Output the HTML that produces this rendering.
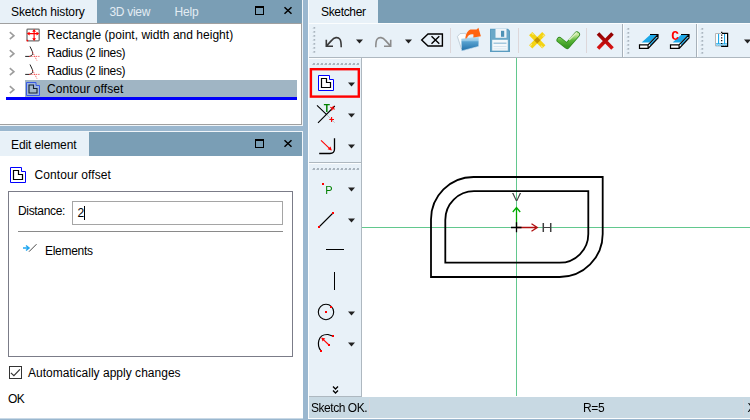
<!DOCTYPE html>
<html>
<head>
<meta charset="utf-8">
<title>Sketcher</title>
<style>
*{box-sizing:border-box;margin:0;padding:0}
html,body{width:750px;height:420px;overflow:hidden}
body{position:relative;background:#9ab7cf;font-family:"Liberation Sans",sans-serif;font-size:12px;color:#000}
.abs{position:absolute}
.t{position:absolute;white-space:nowrap;line-height:16px;height:16px;font-size:12px;color:#000}
.tabbar{position:absolute;background:#7a9eb5}
.tab{position:absolute;background:#e8f1f8}
.tw{color:#e3ecf3}
svg{position:absolute;overflow:visible}
#cv,#lb,#tb{will-change:transform}
</style>
</head>
<body>

<!-- ================= LEFT TOP: Sketch history ================= -->
<div class="abs" style="left:0;top:0;width:302px;height:125px;background:#fff"></div>
<div class="tabbar" style="left:0;top:0;width:302px;height:23px"></div>
<div class="tab" style="left:0;top:0;width:97px;height:23px"></div>
<div class="t" id="t1" style="left:11px;top:4px;letter-spacing:-0.12px">Sketch history</div>
<div class="t tw" id="t2" style="left:109.5px;top:4px;letter-spacing:-0.3px">3D view</div>
<div class="t tw" id="t3" style="left:174.5px;top:4px;letter-spacing:-0.2px">Help</div>
<svg style="left:255px;top:6px" width="10" height="10"><rect x="0.5" y="1" width="8" height="7.5" fill="none" stroke="#000" stroke-width="1"/><rect x="0" y="0" width="9" height="2" fill="#000"/></svg>
<svg style="left:284px;top:6px" width="9" height="9"><path d="M0.5 1.3 L7.5 7.8 M7.5 1.3 L0.5 7.8" stroke="#000" stroke-width="1.5" fill="none"/></svg>
<div class="abs" style="left:0;top:23px;width:302px;height:1px;background:#a0a0a0"></div>
<div class="abs" style="left:301px;top:23px;width:1px;height:102px;background:#a0a0a0"></div>
<div class="abs" style="left:0;top:124px;width:302px;height:1px;background:#a0a0a0"></div>

<div class="abs" style="left:25px;top:80px;width:272px;height:17px;background:#a0b5c4"></div>
<div class="abs" style="left:6px;top:97px;width:291px;height:3px;background:#0000fa"></div>

<svg style="left:9px;top:30px" width="6" height="10"><path d="M0.8 2.2 L4.9 5.7 L0.8 9.2" stroke="#9c9c9c" stroke-width="1.6" fill="none"/></svg>
<svg style="left:9px;top:48px" width="6" height="10"><path d="M0.8 2.2 L4.9 5.7 L0.8 9.2" stroke="#9c9c9c" stroke-width="1.6" fill="none"/></svg>
<svg style="left:9px;top:66px" width="6" height="10"><path d="M0.8 2.2 L4.9 5.7 L0.8 9.2" stroke="#9c9c9c" stroke-width="1.6" fill="none"/></svg>
<svg style="left:9px;top:84px" width="6" height="10"><path d="M0.8 2.2 L4.9 5.7 L0.8 9.2" stroke="#9c9c9c" stroke-width="1.6" fill="none"/></svg>

<svg id="ic-rect" style="left:26px;top:28px" width="14" height="14">
  <rect x="1" y="1.1" width="12.2" height="11.8" rx="0.8" fill="none" stroke="#727272" stroke-width="1.3"/>
  <path d="M8.1 2.5 V11.5 M2.5 5.6 H12" stroke="#f00" stroke-width="1.1" fill="none"/>
  <path d="M8.1 1 L6.2 3.7 H10 Z M8.1 13 L6.2 10.3 H10 Z M0.8 5.6 L3.6 3.7 V7.5 Z M13.3 5.6 L10.5 3.7 V7.5 Z" fill="#f00"/>
  <rect x="0.6" y="11.8" width="1.6" height="1.6" fill="#f00"/>
</svg>
<svg id="ic-rad1" style="left:25px;top:46px" width="16" height="18"><path d="M5 0.5 L7.4 5.6 Q8.6 9.6 4.5 10.4 H0.2" stroke="#222" stroke-width="1" fill="none"/>
  <path d="M7.5 6 L12 14.7 M4 10.4 H14.5" stroke="#f03030" stroke-width="0.8" fill="none" stroke-dasharray="1.3 1"/></svg>
<svg id="ic-rad2" style="left:25px;top:64px" width="16" height="18"><path d="M5 0.5 L7.4 5.6 Q8.6 9.6 4.5 10.4 H0.2" stroke="#222" stroke-width="1" fill="none"/>
  <path d="M7.5 6 L12 14.7 M4 10.4 H14.5" stroke="#f03030" stroke-width="0.8" fill="none" stroke-dasharray="1.3 1"/></svg>
<svg id="ic-co1" style="left:26px;top:82px" width="14" height="14">
  <path d="M0.5 0.5 H10 V3.5 H13.5 V13.5 H0.5 Z" fill="#9db6e0" stroke="#3a5ae2" stroke-width="1"/>
  <path d="M3 3 H7.5 V6.5 H11 V11 H3 Z" fill="#a3b8c8" stroke="#16222e" stroke-width="1.1"/>
</svg>

<div class="t" id="t4" style="left:47px;top:27px;letter-spacing:0.02px">Rectangle (point, width and height)</div>
<div class="t" id="t5" style="left:47px;top:45px;letter-spacing:-0.32px">Radius (2 lines)</div>
<div class="t" id="t6" style="left:47px;top:63px;letter-spacing:-0.32px">Radius (2 lines)</div>
<div class="t" id="t7" style="left:47px;top:81px;letter-spacing:0.1px">Contour offset</div>

<!-- ================= LEFT BOTTOM: Edit element ================= -->
<div class="abs" style="left:0;top:125px;width:303px;height:1px;background:#f0f5f9"></div>
<div class="abs" style="left:302px;top:0;width:1px;height:126px;background:#f0f5f9"></div>
<div class="abs" style="left:0;top:131px;width:303px;height:1px;background:#f0f5f9"></div>
<div class="abs" style="left:0;top:132px;width:303px;height:286px;background:#fff"></div>
<div class="abs" style="left:0;top:418px;width:303px;height:1px;background:#c9d9e6"></div>
<div class="tabbar" style="left:0;top:132px;width:302px;height:24px"></div>
<div class="abs" style="left:302px;top:132px;width:1px;height:24px;background:#f0f5f9"></div>
<div class="tab" style="left:0;top:132px;width:89px;height:24px"></div>
<div class="t" id="t8" style="left:11px;top:137px;letter-spacing:-0.1px">Edit element</div>
<svg style="left:255px;top:139px" width="10" height="10"><rect x="0.5" y="1" width="8" height="7.5" fill="none" stroke="#000" stroke-width="1"/><rect x="0" y="0" width="9" height="2" fill="#000"/></svg>
<svg style="left:284px;top:139px" width="9" height="9"><path d="M0.5 1.3 L7.5 7.8 M7.5 1.3 L0.5 7.8" stroke="#000" stroke-width="1.5" fill="none"/></svg>

<svg id="ic-co2" style="left:10px;top:167px" width="17" height="17">
  <path d="M0.5 0.5 H11.5 V4.5 H15.5 V15.5 H0.5 Z" fill="#fff" stroke="#0000ff" stroke-width="1"/>
  <path d="M3.5 3.5 H8.5 V7.5 H12.5 V12.5 H3.5 Z" fill="none" stroke="#000" stroke-width="1.2"/>
</svg>
<div class="t" id="t9" style="left:34.5px;top:167px;letter-spacing:0.1px">Contour offset</div>

<div class="abs" style="left:8px;top:191px;width:285px;height:166px;border:1px solid #7b7c88;background:#fff"></div>
<div class="t" id="t10" style="left:18px;top:203px;letter-spacing:-0.33px">Distance:</div>
<div class="abs" style="left:72px;top:201px;width:211px;height:24px;border:1px solid #a5a5a5;background:#fff"></div>
<div class="t" id="t11" style="left:77.5px;top:205px;letter-spacing:-0.5px">2</div>
<div class="abs" style="left:84px;top:206px;width:1px;height:14px;background:#000"></div>
<div class="abs" style="left:18px;top:231px;width:265px;height:1px;background:#8a8a8a"></div>
<svg id="ic-el" style="left:22px;top:243px" width="16" height="10">
  <path d="M7 8.7 L14.5 1.2" stroke="#333" stroke-width="0.9" fill="none"/>
  <path d="M1 5 H6 M4 2.5 L7 5 L4 7.5" stroke="#22a7f0" stroke-width="1.5" fill="none"/>
</svg>
<div class="t" id="t12" style="left:45px;top:243px;letter-spacing:-0.3px">Elements</div>

<div class="abs" style="left:9px;top:366px;width:13px;height:13px;border:1px solid #333;background:#fff"></div>
<svg style="left:9px;top:366px" width="13" height="13"><path d="M1.9 6.9 L4.9 9.6 L10.9 3.3" stroke="#333" stroke-width="1.2" fill="none"/></svg>
<div class="t" id="t13" style="left:28px;top:365px;letter-spacing:0.02px">Automatically apply changes</div>
<div class="t" id="t14" style="left:8px;top:391px;letter-spacing:-0.6px">OK</div>

<!-- ================= RIGHT: Sketcher ================= -->
<div class="abs" style="left:308px;top:0;width:442px;height:419px;background:#e8f1f8"></div>
<div class="tabbar" style="left:378px;top:0;width:372px;height:23px"></div>
<div class="abs" style="left:308px;top:23px;width:442px;height:1px;background:#fbfdfe"></div>
<div class="abs" style="left:308px;top:0;width:1px;height:419px;background:#fbfdfe"></div>
<div class="t" id="t15" style="left:321px;top:4px;letter-spacing:-0.33px">Sketcher</div>

<!-- top toolbar -->
<svg id="tb" style="left:0;top:0" width="750" height="60">
  <rect x="313.5" y="27" width="1.7" height="1.7" fill="#aab5bf"/><rect x="312.7" y="28" width="1" height="1" fill="#c8d2da"/><rect x="313.5" y="31" width="1.7" height="1.7" fill="#aab5bf"/><rect x="312.7" y="32" width="1" height="1" fill="#c8d2da"/><rect x="313.5" y="35" width="1.7" height="1.7" fill="#aab5bf"/><rect x="312.7" y="36" width="1" height="1" fill="#c8d2da"/><rect x="313.5" y="39" width="1.7" height="1.7" fill="#aab5bf"/><rect x="312.7" y="40" width="1" height="1" fill="#c8d2da"/><rect x="313.5" y="43" width="1.7" height="1.7" fill="#aab5bf"/><rect x="312.7" y="44" width="1" height="1" fill="#c8d2da"/><rect x="313.5" y="47" width="1.7" height="1.7" fill="#aab5bf"/><rect x="312.7" y="48" width="1" height="1" fill="#c8d2da"/><rect x="313.5" y="51" width="1.7" height="1.7" fill="#aab5bf"/><rect x="312.7" y="52" width="1" height="1" fill="#c8d2da"/>
  <!-- undo -->
  <path d="M326.3 39.7 V46.3 H333 M326.6 45.9 L331.6 40.4 C334 37.2 338 36.6 340 39.4 C341 41 341.2 43 341.2 47.2" stroke="#3a3a3a" stroke-width="1.6" fill="none"/>
  <path d="M356 39.5 h7 l-3.5 4 z" fill="#222"/>
  <!-- redo -->
  <path d="M390.7 39.7 V46.3 H384 M390.4 45.9 L385.4 40.4 C383 37.2 379 36.6 377 39.4 C376 41 375.8 43 375.8 47.2" stroke="#8c8c8c" stroke-width="1.6" fill="none"/>
  <path d="M405 39.5 h7 l-3.5 4 z" fill="#222"/>
  <!-- backspace -->
  <path d="M421.7 40 L428 34 H442.4 V46 H428 Z" stroke="#000" stroke-width="1.4" fill="none"/>
  <path d="M431.5 36.3 L439.3 43.8 M439.3 36.3 L431.5 43.8" stroke="#000" stroke-width="1.4" fill="none"/>
  <rect x="450" y="28" width="1" height="25" fill="#ddd7da"/>
  <!-- open -->
  <defs>
    <linearGradient id="gfold" x1="0" y1="0" x2="0" y2="1"><stop offset="0" stop-color="#c4e2f2"/><stop offset="0.32" stop-color="#8cc4e4"/><stop offset="0.36" stop-color="#58a2d0"/><stop offset="1" stop-color="#1f6ea8"/></linearGradient>
    <linearGradient id="gchk" x1="0" y1="0" x2="0" y2="1"><stop offset="0" stop-color="#c8e8a0"/><stop offset="0.5" stop-color="#5cb83a"/><stop offset="1" stop-color="#3a9a22"/></linearGradient>
    <linearGradient id="gred" x1="0" y1="0" x2="0" y2="1"><stop offset="0" stop-color="#8e0000"/><stop offset="1" stop-color="#dc1414"/></linearGradient>
  </defs>
  <path d="M457.4 36.6 L460 33.6 L465.3 33.3 L467.5 36.5 L466 44 L461.5 49 Z" fill="#fbfdfe" stroke="#aebfcc" stroke-width="0.7"/>
  <path d="M461.3 38.7 L478.8 36.4 L478.4 46.6 L461.8 51 Z" fill="url(#gfold)"/>
  <path d="M461.8 50.8 L478.4 46.5" stroke="#dcecf6" stroke-width="0.6" fill="none"/>
  <path d="M465.3 38.6 C465.8 34 467.5 30.5 470.5 29.4 L476.6 29.5 L478.4 27.7 L480.9 36.2 L473.3 37.5 L473.5 34.5 C471 33.5 468 35 466.4 38.4 Z" fill="#ff6410"/>
  <!-- save -->
  <path d="M490 28.8 H508 L510 30.8 V52 H490 Z" fill="#5a9cc0"/>
  <path d="M491 29.8 H507.6 L509 31.2 V51 H491 Z" fill="#6aa8c8"/>
  <rect x="495.5" y="28.8" width="11" height="9" fill="#eef4f9"/>
  <rect x="501" y="30.8" width="3.2" height="6" fill="#4e92b6"/>
  <rect x="492.2" y="39.8" width="15.6" height="10.8" fill="#f4f8fb"/>
  <rect x="493.5" y="42.5" width="13" height="1.5" fill="#a4c8de"/>
  <rect x="493.5" y="46" width="13" height="1" fill="#d4e3ee"/>
  <rect x="493.5" y="48.3" width="13" height="1" fill="#dfeaf2"/>
  <rect x="518" y="28" width="1" height="25" fill="#ddd7da"/>
  <!-- yellow X -->
  <path d="M530.7 33.7 L543.8 46.8 M543.8 33.7 L530.7 46.8" stroke="#f4d414" stroke-width="4.6" fill="none"/>
  <path d="M531.5 32.9 L533.5 34.9 M544.6 34.5 L542.6 36.5 M542.9 47.6 L540.9 45.6 M529.9 46 L531.9 44" stroke="#f9e67a" stroke-width="1.2" fill="none"/>
  <rect x="534.95" y="37.95" width="4.6" height="4.6" fill="#c49600" transform="rotate(45 537.25 40.25)"/>
  <!-- green check -->
  <path d="M559.5 40 L567 46 L577 34.5" stroke="#2f8a1e" stroke-width="6" fill="none" stroke-linejoin="round" stroke-linecap="round"/>
  <path d="M559.5 40 L567 46 L577 34.5" stroke="url(#gchk)" stroke-width="4.4" fill="none" stroke-linejoin="round" stroke-linecap="round"/>
  <path d="M569.5 39.5 L576.3 32.8" stroke="#e4f4cc" stroke-width="1.5" fill="none" stroke-linecap="round" opacity="0.85"/>
  <rect x="586" y="28" width="1" height="25" fill="#ddd7da"/>
  <!-- red X -->
  <path d="M598 33.5 L612.5 48.5 M612.5 33.5 L598 48.5" stroke="url(#gred)" stroke-width="3.6" fill="none"/>
  <rect x="622" y="24" width="1" height="33" fill="#a7b1ba"/>
  <rect x="623" y="24" width="1" height="33" fill="#fbfdfe"/>
  <rect x="627.5" y="28" width="1.7" height="1.7" fill="#aab5bf"/><rect x="626.7" y="29" width="1" height="1" fill="#c8d2da"/><rect x="627.5" y="32" width="1.7" height="1.7" fill="#aab5bf"/><rect x="626.7" y="33" width="1" height="1" fill="#c8d2da"/><rect x="627.5" y="36" width="1.7" height="1.7" fill="#aab5bf"/><rect x="626.7" y="37" width="1" height="1" fill="#c8d2da"/><rect x="627.5" y="40" width="1.7" height="1.7" fill="#aab5bf"/><rect x="626.7" y="41" width="1" height="1" fill="#c8d2da"/><rect x="627.5" y="44" width="1.7" height="1.7" fill="#aab5bf"/><rect x="626.7" y="45" width="1" height="1" fill="#c8d2da"/><rect x="627.5" y="48" width="1.7" height="1.7" fill="#aab5bf"/><rect x="626.7" y="49" width="1" height="1" fill="#c8d2da"/><rect x="627.5" y="52" width="1.7" height="1.7" fill="#aab5bf"/><rect x="626.7" y="53" width="1" height="1" fill="#c8d2da"/>
  <!-- eraser 1 -->
  <g id="eraser">
    <path d="M650.2 34.5 H658 V38 L648 48.5 H639.5 V44.8 Z" fill="#fff"/>
    <path d="M650.2 34.8 H657.6 L649.4 42.6 H641.6 Z" fill="#1ca8e8"/>
    <path d="M650.4 45.4 L656.8 39 L656.8 37 L649.6 44 Z" fill="#1ca8e8"/>
    <path d="M650 34.5 H658 V38 L648.2 48.4 H639.5 V44.8 H648 L658 34.7 M648.1 44.8 V48.4" fill="none" stroke="#000" stroke-width="1.2"/>
  </g>
  <!-- eraser 2 -->
  <g transform="translate(31 0)">
    <path d="M650.2 34.5 H658 V38 L648 48.5 H639.5 V44.8 Z" fill="#fff"/>
    <path d="M650.2 34.8 H657.6 L649.4 42.6 H641.6 Z" fill="#1ca8e8"/>
    <path d="M650.4 45.4 L656.8 39 L656.8 37 L649.6 44 Z" fill="#1ca8e8"/>
    <path d="M650 34.5 H658 V38 L648.2 48.4 H639.5 V44.8 H648 L658 34.7 M648.1 44.8 V48.4" fill="none" stroke="#000" stroke-width="1.2"/>
  </g>
    <text x="671.3" y="39.6" font-family="Liberation Mono, monospace" font-weight="bold" font-size="13" fill="#ff0000">C</text>
  <rect x="696" y="24" width="1" height="33" fill="#a7b1ba"/>
  <rect x="697" y="24" width="1" height="33" fill="#fbfdfe"/>
  <rect x="701.5" y="28" width="1.7" height="1.7" fill="#aab5bf"/><rect x="700.7" y="29" width="1" height="1" fill="#c8d2da"/><rect x="701.5" y="32" width="1.7" height="1.7" fill="#aab5bf"/><rect x="700.7" y="33" width="1" height="1" fill="#c8d2da"/><rect x="701.5" y="36" width="1.7" height="1.7" fill="#aab5bf"/><rect x="700.7" y="37" width="1" height="1" fill="#c8d2da"/><rect x="701.5" y="40" width="1.7" height="1.7" fill="#aab5bf"/><rect x="700.7" y="41" width="1" height="1" fill="#c8d2da"/><rect x="701.5" y="44" width="1.7" height="1.7" fill="#aab5bf"/><rect x="700.7" y="45" width="1" height="1" fill="#c8d2da"/><rect x="701.5" y="48" width="1.7" height="1.7" fill="#aab5bf"/><rect x="700.7" y="49" width="1" height="1" fill="#c8d2da"/><rect x="701.5" y="52" width="1.7" height="1.7" fill="#aab5bf"/><rect x="700.7" y="53" width="1" height="1" fill="#c8d2da"/>
  <!-- mirror icon -->
  <rect x="716" y="34" width="11.5" height="12" fill="#fdfeff"/>
  <path d="M721.5 33.5 H715.5 V46 H721.5" fill="none" stroke="#b6b6b6" stroke-width="1"/>
  <rect x="718" y="34" width="1.1" height="10" fill="#1ca8e8"/>
  <rect x="724" y="34" width="1.1" height="10" fill="#1ca8e8"/>
  <rect x="716" y="43.3" width="11.3" height="1.1" fill="#1ca8e8"/>
  <path d="M716.3 46 l1.2 -1.3 l1.2 1.3 l1.2 -1.3 l1.2 1.3 l1.2 -1.3 l1.2 1.3 l1.2 -1.3 l1.2 1.3 l1 -1.2" stroke="#46b8ec" stroke-width="0.8" fill="none"/>
  <path d="M722 33.4 H727.6 V46.3 H722" stroke="#000" stroke-width="1.2" fill="none"/>
  <path d="M721.7 31.7 V48.3" stroke="#000" stroke-width="1.2" stroke-dasharray="1.2 1.6" fill="none"/>
  <path d="M744 39.5 h7 l-3.5 4 z" fill="#222"/>
</svg>

<!-- canvas -->
<div class="abs" style="left:309px;top:57px;width:441px;height:1px;background:#aeb8c0"></div>
<div class="abs" style="left:309px;top:58px;width:441px;height:1px;background:#fbfdfe"></div>
<div class="abs" style="left:361px;top:58px;width:389px;height:339px;background:#fff;border-left:1px solid #aeb8c0"></div>

<!-- left toolbar -->
<svg id="lb" style="left:0;top:0" width="370" height="420">
  <rect x="313" y="63" width="2" height="2" fill="#a9b4be"/><rect x="312" y="64" width="1" height="1" fill="#c4ced6"/><rect x="317" y="63" width="2" height="2" fill="#a9b4be"/><rect x="316" y="64" width="1" height="1" fill="#c4ced6"/><rect x="321" y="63" width="2" height="2" fill="#a9b4be"/><rect x="320" y="64" width="1" height="1" fill="#c4ced6"/><rect x="325" y="63" width="2" height="2" fill="#a9b4be"/><rect x="324" y="64" width="1" height="1" fill="#c4ced6"/><rect x="329" y="63" width="2" height="2" fill="#a9b4be"/><rect x="328" y="64" width="1" height="1" fill="#c4ced6"/><rect x="333" y="63" width="2" height="2" fill="#a9b4be"/><rect x="332" y="64" width="1" height="1" fill="#c4ced6"/><rect x="337" y="63" width="2" height="2" fill="#a9b4be"/><rect x="336" y="64" width="1" height="1" fill="#c4ced6"/><rect x="341" y="63" width="2" height="2" fill="#a9b4be"/><rect x="340" y="64" width="1" height="1" fill="#c4ced6"/><rect x="345" y="63" width="2" height="2" fill="#a9b4be"/><rect x="344" y="64" width="1" height="1" fill="#c4ced6"/><rect x="349" y="63" width="2" height="2" fill="#a9b4be"/><rect x="348" y="64" width="1" height="1" fill="#c4ced6"/><rect x="353" y="63" width="2" height="2" fill="#a9b4be"/><rect x="352" y="64" width="1" height="1" fill="#c4ced6"/><rect x="357" y="63" width="2" height="2" fill="#a9b4be"/><rect x="356" y="64" width="1" height="1" fill="#c4ced6"/>
  <rect x="310.9" y="69.2" width="47.9" height="27.4" fill="none" stroke="#ff0000" stroke-width="2.4"/>
  <path d="M318.5 75.5 H329.5 V79.5 H333.5 V90.5 H318.5 Z" fill="#fff" stroke="#0000ff" stroke-width="1"/>
  <path d="M321.5 78.5 H326.5 V82.5 H330.5 V87.5 H321.5 Z" fill="none" stroke="#000" stroke-width="1.2"/>
  <path d="M348 82.5 h7 l-3.5 4 z" fill="#222"/>
  <!-- trim -->
  <path d="M326.4 114.4 L334.8 122.8" stroke="#c0c4c8" stroke-width="1" fill="none"/>
  <path d="M317 105.3 L326.4 114.4 M318 122.8 L334.8 106" stroke="#000" stroke-width="1.1" fill="none"/>
  <text x="323.7" y="112" font-family="Liberation Sans, sans-serif" font-weight="bold" font-size="10" fill="#008000">T</text>
  <path d="M330.3 107.3 L334.7 109.3 M333.5 106 L331.5 110.5" stroke="#ff0000" stroke-width="1.1" fill="none"/>
  <path d="M329.3 119.5 H334 M331.6 117 V122" stroke="#ff0000" stroke-width="1.1" fill="none"/>
  <path d="M348 113.5 h7 l-3.5 4 z" fill="#222"/>
  <!-- fillet -->
  <path d="M319.2 153.5 H330 Q334.5 153.5 334.5 149 V138.2" stroke="#000" stroke-width="1.3" fill="none"/>
  <path d="M321 140.3 L331 149.8" stroke="#ff0000" stroke-width="1.1" fill="none"/>
  <path d="M331.8 150.6 L327.6 149.3 L330.5 146.6 Z" fill="#ff0000"/>
  <path d="M348 144.5 h7 l-3.5 4 z" fill="#222"/>
  <rect x="309" y="162" width="52" height="1" fill="#aeb8c0"/>
  <rect x="309" y="163" width="52" height="1" fill="#fbfdfe"/>
  <rect x="313" y="168" width="2" height="2" fill="#a9b4be"/><rect x="312" y="169" width="1" height="1" fill="#c4ced6"/><rect x="317" y="168" width="2" height="2" fill="#a9b4be"/><rect x="316" y="169" width="1" height="1" fill="#c4ced6"/><rect x="321" y="168" width="2" height="2" fill="#a9b4be"/><rect x="320" y="169" width="1" height="1" fill="#c4ced6"/><rect x="325" y="168" width="2" height="2" fill="#a9b4be"/><rect x="324" y="169" width="1" height="1" fill="#c4ced6"/><rect x="329" y="168" width="2" height="2" fill="#a9b4be"/><rect x="328" y="169" width="1" height="1" fill="#c4ced6"/><rect x="333" y="168" width="2" height="2" fill="#a9b4be"/><rect x="332" y="169" width="1" height="1" fill="#c4ced6"/><rect x="337" y="168" width="2" height="2" fill="#a9b4be"/><rect x="336" y="169" width="1" height="1" fill="#c4ced6"/><rect x="341" y="168" width="2" height="2" fill="#a9b4be"/><rect x="340" y="169" width="1" height="1" fill="#c4ced6"/><rect x="345" y="168" width="2" height="2" fill="#a9b4be"/><rect x="344" y="169" width="1" height="1" fill="#c4ced6"/><rect x="349" y="168" width="2" height="2" fill="#a9b4be"/><rect x="348" y="169" width="1" height="1" fill="#c4ced6"/><rect x="353" y="168" width="2" height="2" fill="#a9b4be"/><rect x="352" y="169" width="1" height="1" fill="#c4ced6"/><rect x="357" y="168" width="2" height="2" fill="#a9b4be"/><rect x="356" y="169" width="1" height="1" fill="#c4ced6"/>
  <!-- point -->
  <rect x="322" y="183" width="2" height="2" fill="#ff0000"/>
  <text x="325.3" y="194" font-family="Liberation Sans, sans-serif" font-size="11" fill="#008000">P</text>
  <path d="M348 187.5 h7 l-3.5 4 z" fill="#222"/>
  <!-- line -->
  <path d="M319 227 L333 213" stroke="#000" stroke-width="1.1" fill="none"/>
  <rect x="318" y="226" width="2" height="2" fill="#ff0000"/>
  <rect x="332" y="212" width="2" height="2" fill="#ff0000"/>
  <path d="M348 218.5 h7 l-3.5 4 z" fill="#222"/>
  <rect x="326" y="249" width="18" height="1" fill="#000"/>
  <rect x="334" y="272" width="1" height="18" fill="#000"/>
  <!-- circle -->
  <circle cx="326" cy="312" r="7.7" stroke="#000" stroke-width="1.1" fill="none"/>
  <rect x="325" y="311" width="2" height="2" fill="#ff0000"/>
  <rect x="330" y="306" width="2" height="2" fill="#ff0000"/>
  <path d="M348 311.5 h7 l-3.5 4 z" fill="#222"/>
  <!-- arc -->
  <path d="M321 351 C316.5 345 317.5 334 328 334.5 L332.5 336" stroke="#000" stroke-width="1.2" fill="none"/>
  <path d="M329 345 L322 338.3" stroke="#ff0000" stroke-width="1.1" fill="none"/>
  <path d="M321.3 337.6 L325.3 338.6 L322.5 341.5 Z" fill="#ff0000"/>
  <rect x="320" y="350" width="2" height="2" fill="#ff0000"/>
  <rect x="332" y="335" width="2" height="2" fill="#ff0000"/>
  <rect x="328" y="344" width="2" height="2" fill="#ff0000"/>
  <path d="M348 342.5 h7 l-3.5 4 z" fill="#222"/>
  <path d="M333 386.5 L335.5 389 L338 386.5 M333 390.5 L335.5 393 L338 390.5" stroke="#000" stroke-width="1.3" fill="none"/>
</svg>

<!-- status bar -->
<div class="abs" style="left:309px;top:397px;width:441px;height:21px;background:#c8d9e3"></div>
<div class="abs" style="left:309px;top:396px;width:53px;height:1px;background:#aeb8c0"></div>
<div class="abs" style="left:309px;top:418px;width:441px;height:1px;background:#fbfdfe"></div>
<div class="abs" style="left:369px;top:399px;width:1px;height:17px;background:#d6d6dc"></div>
<div class="t" id="t16" style="left:311px;top:400px;letter-spacing:-0.45px">Sketch OK.</div>
<div class="t" id="t17" style="left:583px;top:400px;letter-spacing:-0.3px">R=5</div>
<div class="abs" style="left:743px;top:399px;width:1px;height:17px;background:#d6d6dc"></div>
<div class="t" id="t18" style="left:747.5px;top:400px">X</div>

<!-- canvas drawing -->
<svg id="cv" style="left:362px;top:58px" width="388" height="338" viewBox="362 58 388 338">
  <path d="M362 227.5 H750 M516.5 58 V396" stroke="#62c88e" stroke-width="1" fill="none"/>
  <path d="M473.5 177 H602.7 V234 A43 43 0 0 1 559.7 277 H431 V219.5 A42.5 42.5 0 0 1 473.5 177 Z" fill="none" stroke="#000" stroke-width="1.8"/>
  <path d="M474 191.2 H588.3 V234 A28.7 28.7 0 0 1 559.6 262.7 H445.3 V219.9 A28.7 28.7 0 0 1 474 191.2 Z" fill="none" stroke="#000" stroke-width="1.8"/>
  <path d="M516.5 227 V208 M512.8 212 L516.5 207.5 L520.2 212" stroke="#00aa00" stroke-width="1.3" fill="none"/>
  <path d="M517 227.5 H537 M531.5 223.8 L537.3 227.5 L531.5 231.2" stroke="#b01010" stroke-width="1.3" fill="none"/>
  <path d="M511 227.5 H521.5 M516.5 222.3 V232.2" stroke="#000" stroke-width="1.3" fill="none"/>
  <text x="0" y="0" transform="translate(541.3 231.5) scale(1.33 1)" font-family="Liberation Sans, sans-serif" font-size="12" fill="#404040">H</text>
  <text x="0" y="0" transform="translate(512 201.3) scale(1.15 0.95)" font-family="Liberation Sans, sans-serif" font-size="12" fill="#404040">V</text>
</svg>

</body>
</html>
